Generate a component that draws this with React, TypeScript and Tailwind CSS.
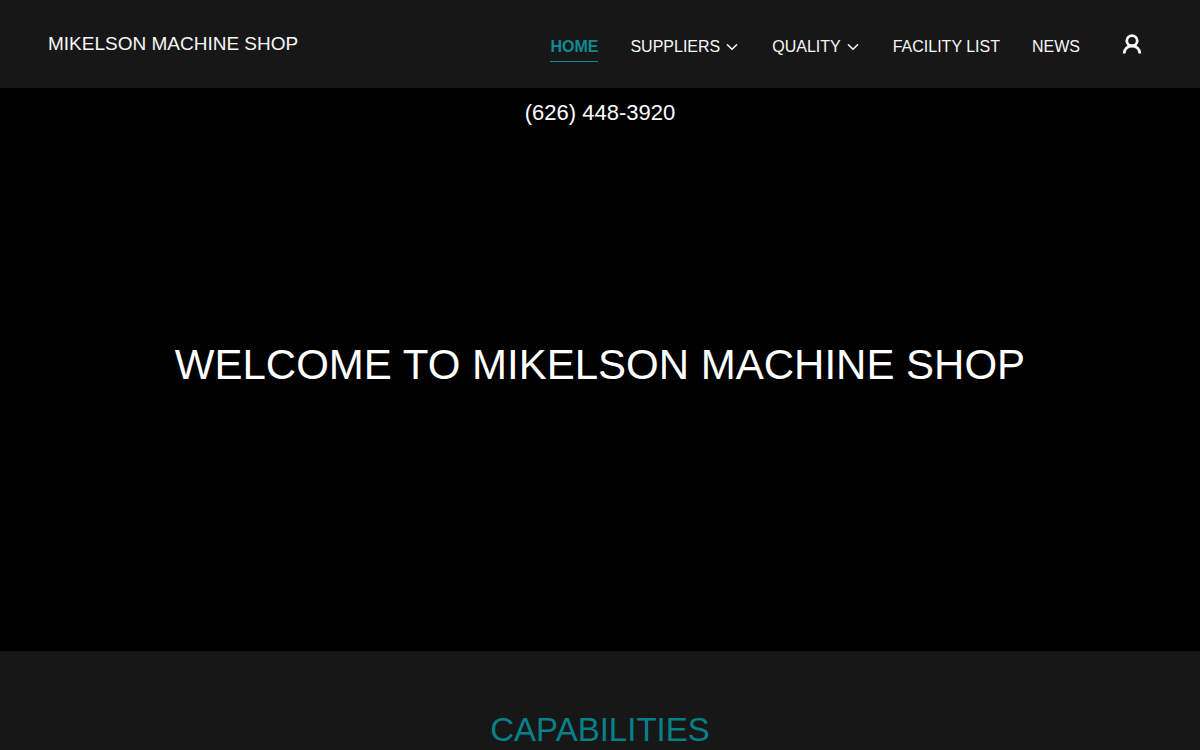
import clsx from "clsx";

const links = [
  { label: "Home", href: "#home", active: true },
  { label: "Suppliers", menu: true },
  { label: "Quality", menu: true },
  { label: "Facility List", href: "#facility-list" },
  { label: "News", href: "#news" },
];

function Chevron() {
  return (
    <svg
      width="16"
      height="16"
      viewBox="0 0 16 16"
      fill="none"
      stroke="currentColor"
      strokeWidth="1.6"
      strokeLinecap="round"
      strokeLinejoin="round"
      aria-hidden="true"
    >
      <path d="M3.4 5.8 8 10.3 12.6 5.8" />
    </svg>
  );
}

function UserIcon() {
  return (
    <svg
      width="24"
      height="24"
      viewBox="0 0 24 24"
      fill="none"
      stroke="currentColor"
      strokeWidth="2.8"
      aria-hidden="true"
    >
      <circle cx="12" cy="8.8" r="5.2" />
      <path d="M4.2 21.4v-.25a7.8 7.4 0 0 1 15.6 0v.25" />
    </svg>
  );
}

function Header() {
  return (
    <header className="flex min-h-22 flex-wrap items-center justify-between gap-x-8 bg-[#171717] px-6 lg:px-12">
      <a href="#home" className="text-[19px] leading-7 uppercase">
        Mikelson Machine Shop
      </a>

      <div className="flex items-center gap-8">
        <nav aria-label="Main" className="mt-[9px]">
          <ul className="flex flex-wrap gap-x-8 text-base uppercase">
            {links.map((link) => (
              <li key={link.label}>
                {link.menu ? (
                  <button
                    type="button"
                    aria-haspopup="true"
                    className="flex items-center gap-1 pb-0.5 uppercase hover:text-[#0f8a93]"
                  >
                    {link.label}
                    <Chevron />
                  </button>
                ) : (
                  <a
                    href={link.href}
                    aria-current={link.active ? "page" : undefined}
                    className={clsx(
                      "block border-b pb-0.5",
                      link.active
                        ? "border-[#0f8a93] font-bold text-[#0f8a93]"
                        : "border-transparent hover:text-[#0f8a93]"
                    )}
                  >
                    {link.label}
                  </a>
                )}
              </li>
            ))}
          </ul>
        </nav>
        <button type="button" aria-label="Account" className="grid size-10 place-items-center">
          <UserIcon />
        </button>
      </div>
    </header>
  );
}

export default function App() {
  return (
    <div className="min-h-screen bg-[#171717] font-['Liberation_Sans',Arial,sans-serif] text-[#f7f7f7]">
      <Header />

      <main>
        <section id="home" className="bg-black text-center">
          <p className="py-2 text-[22px] leading-[34px] text-white">
            <a href="tel:6264483920">(626) 448-3920</a>
          </p>
          <div className="px-6 pt-[198px] pb-[258px]">
            <h1 className="text-[42px] leading-[57px] text-white uppercase">
              Welcome to Mikelson Machine Shop
            </h1>
          </div>
        </section>

        <section id="capabilities" className="px-6 pt-14 text-center">
          <h2 className="text-[33px] leading-[45px] text-[#068089] uppercase">Capabilities</h2>
        </section>
      </main>
    </div>
  );
}
